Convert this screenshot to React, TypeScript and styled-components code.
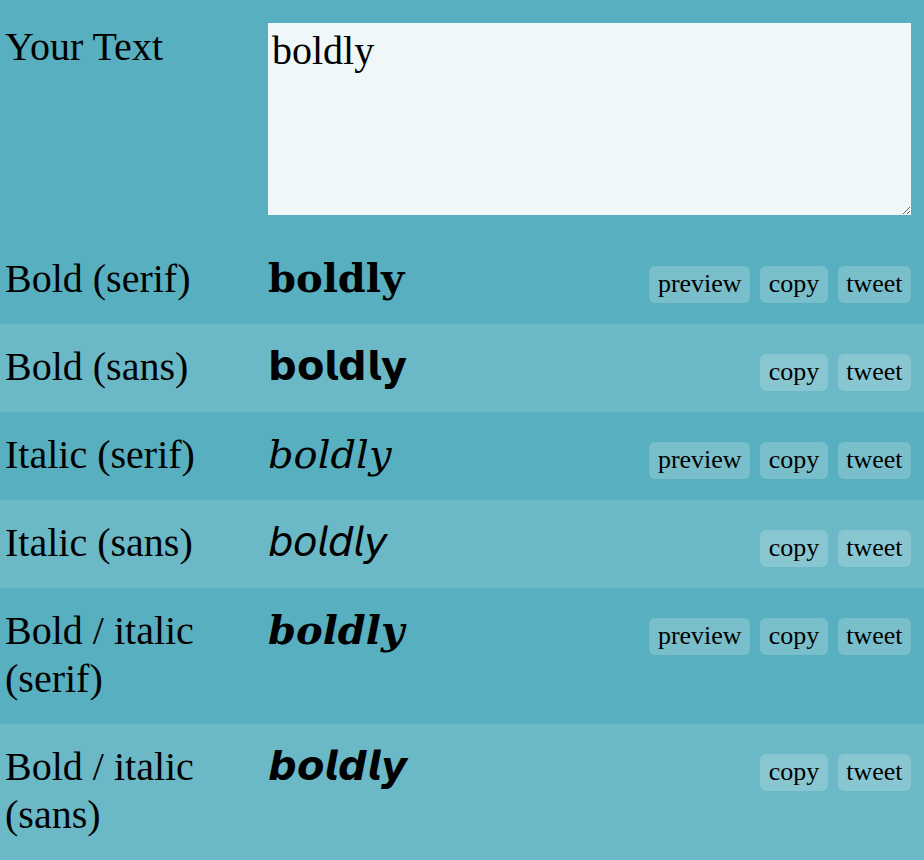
import React, { useState } from 'react'
import styled, { createGlobalStyle } from 'styled-components'

interface Variant {
	label: string
	text: string
	preview: boolean
	serif: boolean
	bold: boolean
	italic: boolean
}

const variants: Variant[] = [
	{ label: 'Bold (serif)', text: '𝐛𝐨𝐥𝐝𝐥𝐲', preview: true, serif: true, bold: true, italic: false },
	{ label: 'Bold (sans)', text: '𝗯𝗼𝗹𝗱𝗹𝘆', preview: false, serif: false, bold: false, italic: false },
	{ label: 'Italic (serif)', text: '𝑏𝑜𝑙𝑑𝑙𝑦', preview: true, serif: true, bold: false, italic: false },
	{ label: 'Italic (sans)', text: '𝘣𝘰𝘭𝘥𝘭𝘺', preview: false, serif: false, bold: false, italic: false },
	{ label: 'Bold / italic (serif)', text: '𝒃𝒐𝒍𝒅𝒍𝒚', preview: true, serif: true, bold: true, italic: true },
	{ label: 'Bold / italic (sans)', text: '𝙗𝙤𝙡𝙙𝙡𝙮', preview: false, serif: false, bold: false, italic: false },
]

const App = () => {
	const [value, setValue] = useState('boldly')
	return (
		<>
			<GlobalStyle />
			<Page>
				<InputRow>
					<Label>Your Text</Label>
					<TextInput value={value} onChange={(e) => setValue(e.target.value)} />
				</InputRow>
				{variants.map((v, i) => (
					<Row key={v.label} light={i % 2 === 1}>
						<Label>{v.label}</Label>
						<Output serif={v.serif} bold={v.bold} italic={v.italic}>
							{v.text}
						</Output>
						<Actions>
							{v.preview && <Button>preview</Button>}
							<Button>copy</Button>
							<Button>tweet</Button>
						</Actions>
					</Row>
				))}
			</Page>
		</>
	)
}

const GlobalStyle = createGlobalStyle`
	body {
		margin: 0;
		background: #57afbf;
		font-family: "Liberation Serif", "Times New Roman", serif;
		color: #000;
	}
`

const Page = styled.div`
	display: flex;
	flex-direction: column;
`

const InputRow = styled.div`
	display: grid;
	grid-template-columns: 263px 1fr;
	align-items: start;
	padding: 23px 13px 21px 5px;
	background: #57afbf;
`

const Row = styled.div<{ light: boolean }>`
	display: grid;
	grid-template-columns: 263px 1fr auto;
	align-items: baseline;
	padding: 19px 13px 21px 5px;
	background: ${(props) => (props.light ? '#6bb9c7' : '#57afbf')};
`

const Label = styled.div`
	font-size: 40px;
	line-height: 48px;
	padding-right: 20px;
`

const TextInput = styled.textarea`
	box-sizing: border-box;
	width: 100%;
	height: 192px;
	margin: 0;
	padding: 4px 4px;
	border: none;
	outline: none;
	background: #eff7f9;
	font-family: "Liberation Serif", "Times New Roman", serif;
	font-size: 40px;
	color: #000;
`

const Output = styled.div<{ serif: boolean; bold: boolean; italic: boolean }>`
	font-family: ${(props) =>
		props.serif
			? '"Liberation Serif", "DejaVu Serif", serif'
			: '"Liberation Serif", "DejaVu Sans", sans-serif'};
	font-weight: ${(props) => (props.bold ? 700 : 400)};
	font-style: ${(props) => (props.italic ? 'italic' : 'normal')};
	font-size: 40px;
	line-height: 48px;
`

const Actions = styled.div`
	display: flex;
	align-items: baseline;
	justify-content: flex-end;
	gap: 10px;
`

const Button = styled.button`
	font-family: "Liberation Serif", "Times New Roman", serif;
	font-size: 26px;
	line-height: 30px;
	padding: 3.5px 8.5px;
	border: none;
	border-radius: 6px;
	background: rgba(255, 255, 255, 0.2);
	color: #000;
	cursor: pointer;
`

export default App
